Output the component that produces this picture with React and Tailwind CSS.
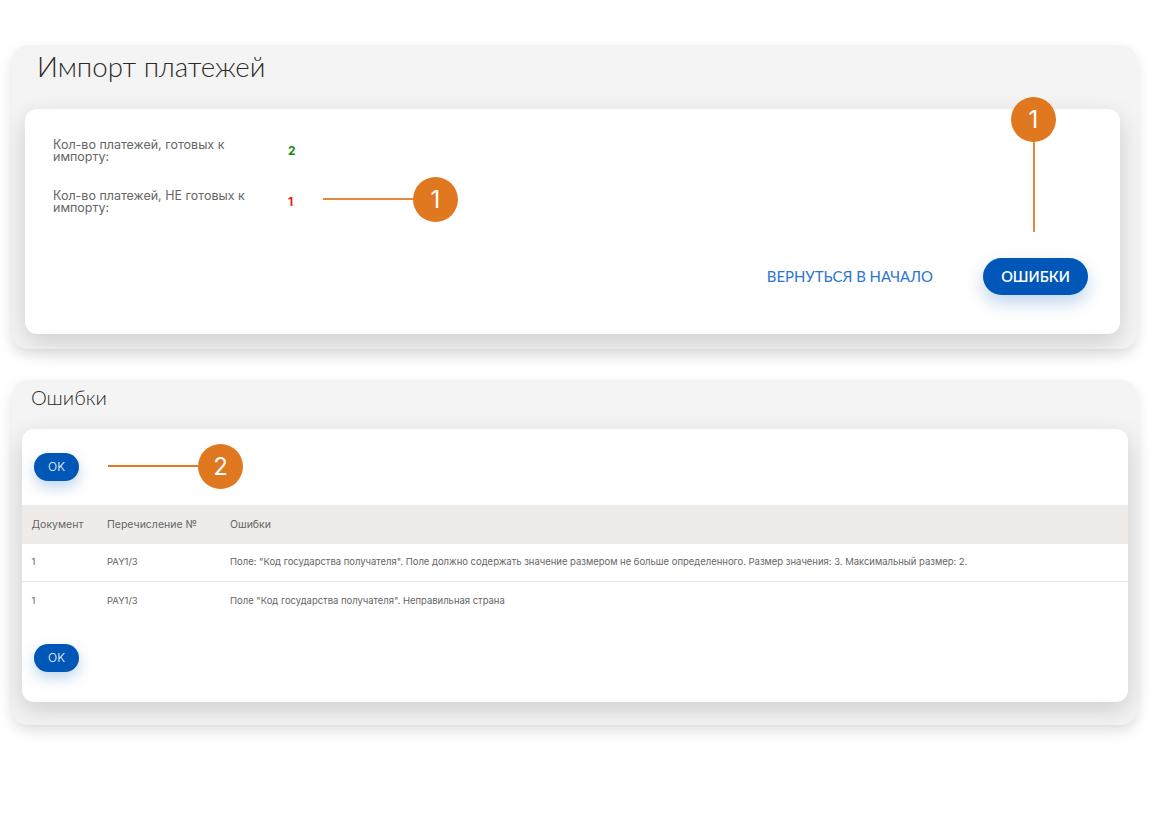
import React from "react";

const headingFont = "font-['Lato','Inter',sans-serif]";

const errorRows = [
  {
    doc: "1",
    transfer: "PAY1/3",
    text: 'Поле: "Код государства получателя". Поле должно содержать значение размером не больше определенного. Размер значения: 3. Максимальный размер: 2.',
  },
  {
    doc: "1",
    transfer: "PAY1/3",
    text: 'Поле "Код государства получателя". Неправильная страна',
  },
];

const Marker = ({ children, className }) => (
  <div
    className={`absolute w-[45px] h-[45px] rounded-full bg-[#e07820] text-white flex items-center justify-center text-[24px] leading-none font-['Inter',sans-serif] ${className}`}
  >
    {children}
  </div>
);

const OkButton = () => (
  <button className="w-[45px] h-[28px] rounded-full bg-[#0057b8] text-white text-[12px] font-light shadow-[0_6px_14px_rgba(0,87,184,0.25)]">
    OK
  </button>
);

const Panel = ({ children, className }) => (
  <section
    className={`bg-[#f4f4f4] rounded-[16px] shadow-[0_6px_14px_rgba(0,0,0,0.12)] ${className}`}
  >
    {children}
  </section>
);

const Card = ({ children, className }) => (
  <div
    className={`relative bg-white rounded-[12px] shadow-[0_8px_24px_rgba(0,0,0,0.16)] ${className}`}
  >
    {children}
  </div>
);

export default function App() {
  return (
    <div className="min-h-[817px] bg-white pt-[45px] px-[12px] font-['Inter',sans-serif] text-[#666666]">
      {/* Import summary */}
      <Panel className="w-[1125px] h-[304px] pt-[4px] pl-[13px] pr-[17px]">
        <h1
          className={`${headingFont} pl-[12px] h-[60px] text-[27.7px] leading-[36px] font-light text-[#2e2a28]`}
        >
          Импорт платежей
        </h1>
        <Card className="h-[225px] pt-[29px] pl-[28px]">
          <div className="flex items-center h-[26px]">
            <p className="w-[206px] text-[12.5px] leading-[12.5px]">
              Кол-во платежей, готовых к импорту:
            </p>
            <span className="ml-[29px] text-[12px] font-bold text-[#0a8a12]">2</span>
          </div>
          <div className="flex items-center h-[26px] mt-[25px]">
            <p className="w-[206px] text-[12.5px] leading-[12.5px]">
              Кол-во платежей, НЕ готовых к импорту:
            </p>
            <span className="ml-[29px] text-[12px] font-bold text-[#f01822]">1</span>
          </div>
          <div className="flex items-center justify-end mt-[43px] pr-[32px]">
            <button
              className={`${headingFont} text-[14.9px] text-[#2b76cc] mr-[50px]`}
            >
              ВЕРНУТЬСЯ В НАЧАЛО
            </button>
            <button
              className={`${headingFont} w-[105px] h-[37px] rounded-full bg-[#0057b8] text-white text-[14.5px] font-semibold shadow-[0_8px_18px_rgba(0,87,184,0.25)]`}
            >
              ОШИБКИ
            </button>
          </div>
          <div className="absolute left-[298px] top-[89px] w-[90px] h-[2px] bg-[#e4883a]" />
          <Marker className="left-[388px] top-[68px]">1</Marker>
          <div className="absolute left-[1008px] top-[33px] w-[2px] h-[90px] bg-[#e4883a]" />
          <Marker className="left-[986px] top-[-12px]">1</Marker>
        </Card>
      </Panel>

      {/* Errors */}
      <Panel className="w-[1125px] h-[345px] mt-[31px] pt-[3px] pl-[10px] pr-[9px]">
        <h2
          className={`${headingFont} pl-[9px] h-[46px] text-[20px] leading-[28px] font-light text-[#2e2a28]`}
        >
          Ошибки
        </h2>
        <Card className="h-[273px]">
          <div className="h-[76px] pt-[24px] pl-[12px]">
            <OkButton />
          </div>
          <div className="flex items-center h-[39px] bg-[#efebe8] text-[10.5px]">
            <div className="w-[85px] pl-[9.5px]">Документ</div>
            <div className="w-[123px]">Перечисление №</div>
            <div>Ошибки</div>
          </div>
          {errorRows.map((row, i) => (
            <div
              key={i}
              className={`flex items-center h-[38px] text-[9.46px] ${
                i === 0 ? "border-b border-[#e6e6e6]" : ""
              }`}
            >
              <div className="w-[85px] pl-[9.5px]">{row.doc}</div>
              <div className="w-[123px]">{row.transfer}</div>
              <div>{row.text}</div>
            </div>
          ))}
          <div className="pt-[24px] pl-[12px]">
            <OkButton />
          </div>
          <div className="absolute left-[86px] top-[36px] w-[90px] h-[2px] bg-[#e07820]" />
          <Marker className="left-[176px] top-[15px]">2</Marker>
        </Card>
      </Panel>
    </div>
  );
}
